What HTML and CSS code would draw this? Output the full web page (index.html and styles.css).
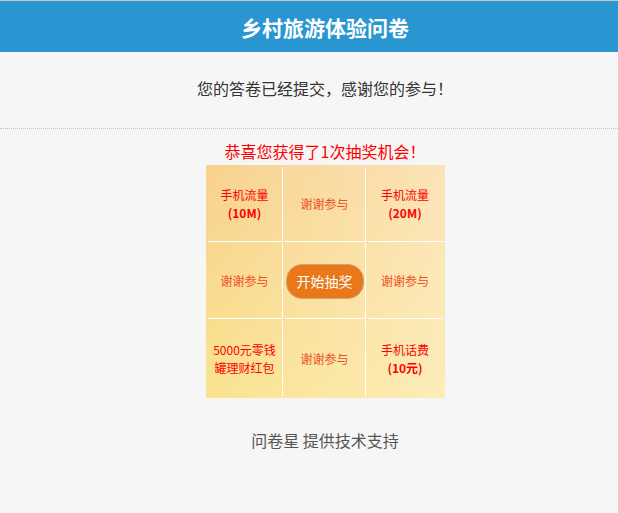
FILE: index.html
```html
<!DOCTYPE html>
<html lang="zh-CN">

<head>
    <meta charset="UTF-8">
    <meta name="viewport" content="width=device-width, initial-scale=1.0">
    <title>乡村旅游体验问卷</title>
    <link rel="stylesheet" href="styles.css">
</head>

<body>
    <!-- 标题 -->
    <div class="header">
        <div class="title">乡村旅游体验问卷</div>
    </div>
    <!-- 提交信息 -->
    <div class="submit-msg">您的答卷已经提交，感谢您的参与！</div>
    <!-- 抽奖 -->
    <div class="lottery">
        <div class="lottery-tip">恭喜您获得了1次抽奖机会！</div>
        <div class="lottery-grid">
            <div class="cell prize"><span>手机流量<br><b>(10M)</b></span></div>
            <div class="cell thanks"><span>谢谢参与</span></div>
            <div class="cell prize"><span>手机流量<br><b>(20M)</b></span></div>
            <div class="cell thanks"><span>谢谢参与</span></div>
            <div class="cell cell-btn">
                <button class="start-btn" type="button">开始抽奖</button>
            </div>
            <div class="cell thanks"><span>谢谢参与</span></div>
            <div class="cell prize"><span>5000元零钱<br>罐理财红包</span></div>
            <div class="cell thanks"><span>谢谢参与</span></div>
            <div class="cell prize"><span>手机话费<br><b>(10元)</b></span></div>
        </div>
        <div class="footer">问卷星 提供技术支持</div>
    </div>
</body>

</html>
```

FILE: styles.css
```css
* {
    margin: 0;
    padding: 0;
    box-sizing: border-box;
}

body {
    font-family: "Microsoft YaHei", "Noto Sans CJK SC", "Noto Sans", sans-serif;
    background-color: #f6f6f6;
    color: #333;
}

/* 标题 */
.header {
    border-top: 1px solid #c8c8c8;
    background-color: #2996d1;
    height: 52px;
    padding-left: 32px;
    display: flex;
    justify-content: center;
    align-items: center;
}

.title {
    color: #fff;
    font-size: 21px;
    font-weight: bold;
}

/* 提交信息 */
.submit-msg {
    padding: 24px 0 28px 32px;
    line-height: 24px;
    font-size: 16px;
    text-align: center;
    border-bottom: 1px dotted #c4c4c4;
}

/* 抽奖 */
.lottery {
    padding-left: 32px;
    display: flex;
    flex-direction: column;
    align-items: center;
}

.lottery-tip {
    margin: 10px 0 2px;
    line-height: 24px;
    font-size: 16px;
    color: #f00;
}

.lottery-grid {
    display: grid;
    grid-template-columns: 75px 81px 75px;
    grid-template-rows: repeat(3, 75px);
    gap: 2px;
    padding: 2px;
    background:
        linear-gradient(to right, rgba(255, 255, 255, 0), rgba(255, 248, 235, 0.45)),
        linear-gradient(to bottom, #f8d28e, #fae38f);
}

.cell {
    display: flex;
    justify-content: center;
    align-items: center;
    text-align: center;
    font-size: 12px;
    line-height: 18px;
}

.cell:nth-child(3n+1),
.cell:nth-child(3n+2) {
    border-right: 1px solid #fff;
}

.cell:nth-child(-n+6) {
    border-bottom: 1px solid #fff;
}

.prize {
    color: #f00;
}

.prize b {
    font-size: 12px;
}

.thanks {
    color: #ef4f22;
}

.start-btn {
    width: 78px;
    height: 35px;
    border: 1px solid #d9a06c;
    border-radius: 16px;
    background-color: #e8781a;
    color: #fff;
    font-family: inherit;
    font-size: 14px;
    cursor: pointer;
}

.footer {
    margin-top: 30px;
    line-height: 24px;
    font-size: 16px;
    color: #555;
}
```
